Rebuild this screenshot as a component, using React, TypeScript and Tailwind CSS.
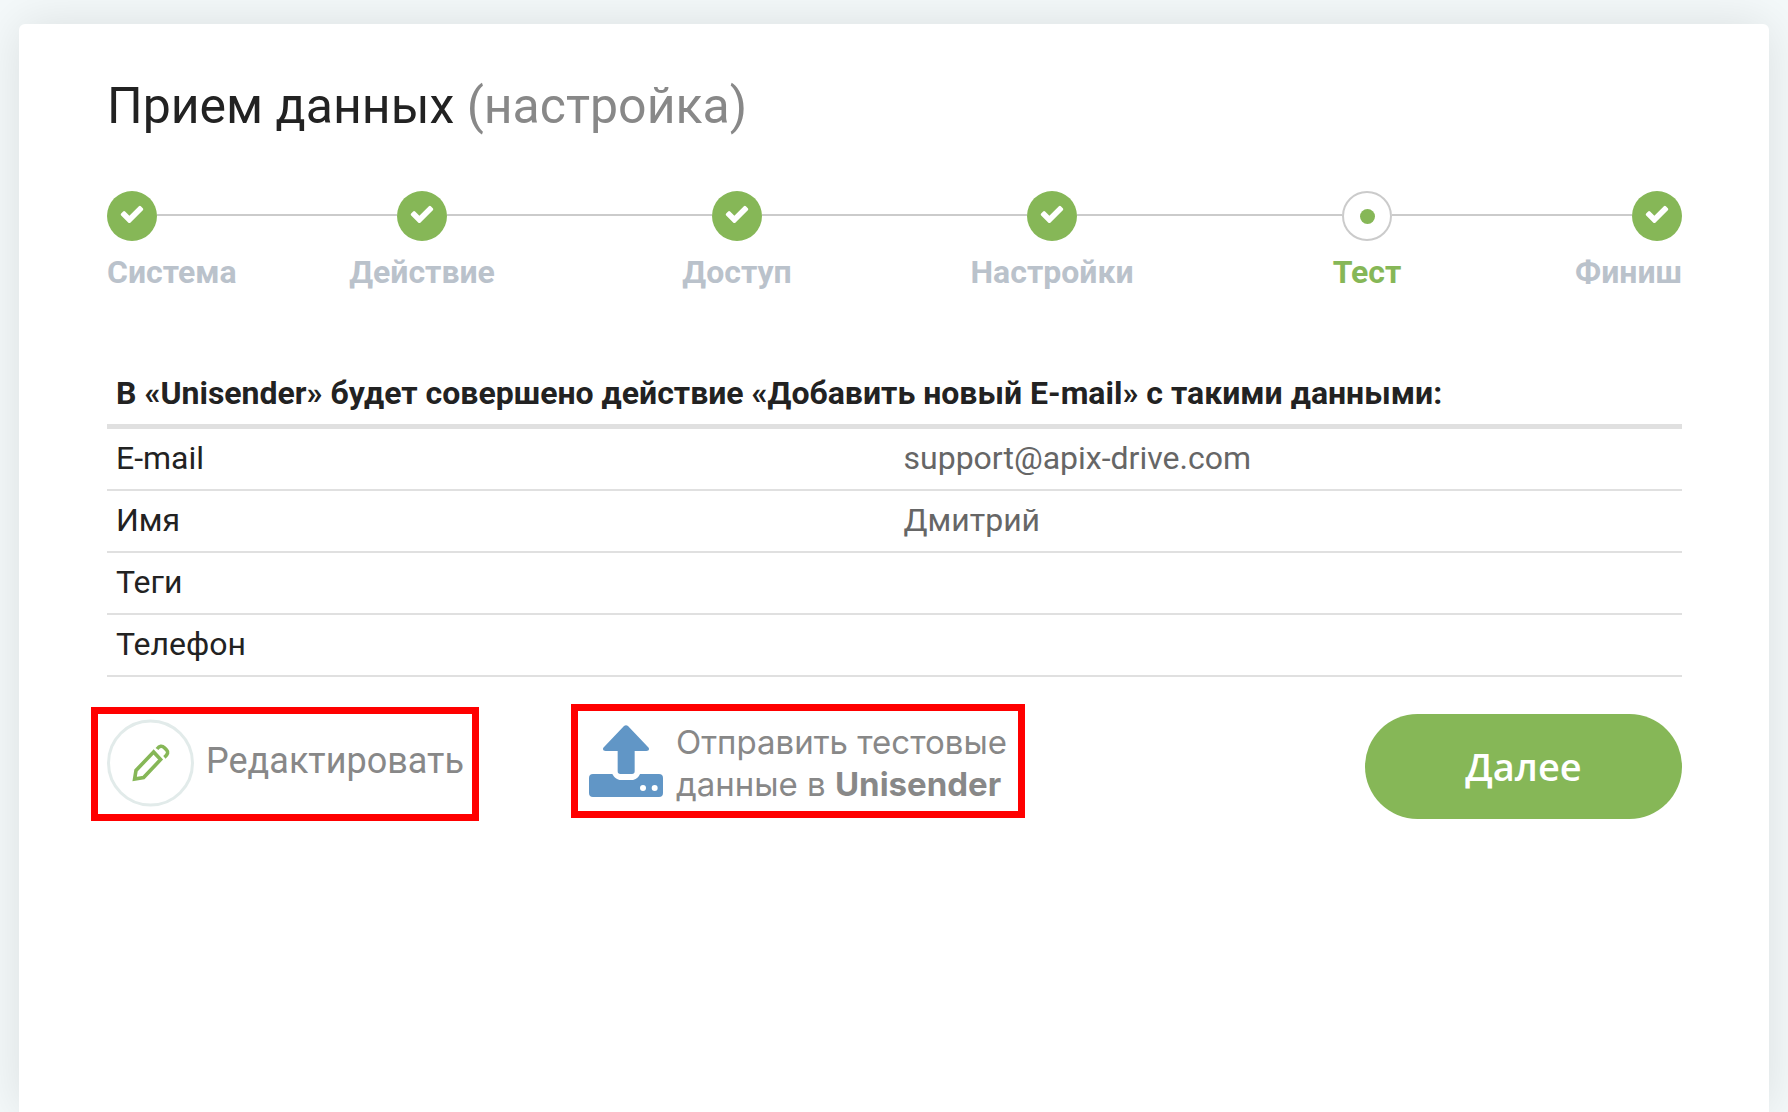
type Step = { label: string; state: "done" | "current" };

const steps: Step[] = [
  { label: "Система", state: "done" },
  { label: "Действие", state: "done" },
  { label: "Доступ", state: "done" },
  { label: "Настройки", state: "done" },
  { label: "Тест", state: "current" },
  { label: "Финиш", state: "done" },
];

const rows = [
  { name: "E-mail", value: "support@apix-drive.com" },
  { name: "Имя", value: "Дмитрий" },
  { name: "Теги", value: "" },
  { name: "Телефон", value: "" },
];

function CheckIcon() {
  return (
    <svg viewBox="0 0 1792 1792" className="size-[26px] fill-white" aria-hidden="true">
      <path d="M1671 566q0 40-28 68L919 1358l-136 136q-28 28-68 28t-68-28L511 1358 149 996q-28-28-28-68t28-68l136-136q28-28 68-28t68 28l294 295 656-657q28-28 68-28t68 28l136 136q28 28 28 68z" />
    </svg>
  );
}

function PencilIcon() {
  return (
    <svg viewBox="0 0 88 88" className="size-[88px] shrink-0" fill="none" aria-hidden="true">
      <circle cx="43.5" cy="44" r="42" stroke="#e2ebea" strokeWidth="3" />
      <g stroke="#86b757" strokeWidth="3.6">
        <path d="M46.6 33 29 51.4 27.6 60 36.6 58.6 53.6 40.6Z" />
        <path d="M50 30Q53.8 25.2 57.4 28.8L59.6 31Q62.6 34 57.4 38.4" />
      </g>
    </svg>
  );
}

function UploadIcon() {
  return (
    <svg viewBox="0 0 222 216" className="h-[72px] w-[74px] shrink-0" fill="#6196c6" aria-hidden="true">
      <path d="M105 3Q111-2 117 3L179 68Q183 78 172 78H137V139Q137 147 129 147H94Q86 147 86 139V78H50Q39 78 43 68Z" />
      <path d="M12 147H70C76 158 84 165 96 165H128C140 165 148 158 153 147H210Q222 147 222 159V204Q222 216 210 216H12Q0 216 0 204V159Q0 147 12 147Z" />
      <circle cx="162" cy="189" r="9" fill="#fff" />
      <circle cx="197" cy="189" r="9" fill="#fff" />
    </svg>
  );
}

function Stepper() {
  return (
    <ol className="mt-[52px] grid grid-cols-[1fr_2fr_2fr_2fr_2fr_1fr]">
      {steps.map((step, i) => {
        const first = i === 0;
        const last = i === steps.length - 1;
        const current = step.state === "current";
        return (
          <li
            key={step.label}
            aria-current={current ? "step" : undefined}
            className={first ? "text-left" : last ? "text-right" : "text-center"}
          >
            <div className="flex items-center">
              {!first && <span className="mb-0.5 h-0.5 flex-1 bg-[#cbcbcb]" />}
              {current ? (
                <span className="flex size-[50px] items-center justify-center rounded-full border-2 border-[#cbcbcb]">
                  <span className="size-[15px] rounded-full bg-[#86b757]" />
                </span>
              ) : (
                <span className="flex size-[50px] items-center justify-center rounded-full bg-[#86b757] pb-1">
                  <CheckIcon />
                </span>
              )}
              {!last && <span className="mb-0.5 h-0.5 flex-1 bg-[#cbcbcb]" />}
            </div>
            <div
              className={
                current
                  ? "mt-[11px] text-[32px] leading-10 font-bold text-[#86b757]"
                  : "mt-[11px] text-[32px] leading-10 font-bold text-[#bac2cb]"
              }
            >
              {step.label}
            </div>
          </li>
        );
      })}
    </ol>
  );
}

function DataTable() {
  return (
    <table className="mt-[72px] w-full table-fixed text-left text-[32px] leading-10 text-[#222]">
      <thead>
        <tr className="border-b-[5px] border-[#e0e0e0]">
          <th colSpan={2} className="px-[9px] pt-[9px] pb-[11px] font-bold">
            В «Unisender» будет совершено действие «Добавить новый E-mail» с такими данными:
          </th>
        </tr>
      </thead>
      <tbody>
        {rows.map((row) => (
          <tr key={row.name} className="border-b-2 border-[#e0e0e0]">
            <th scope="row" className="px-[9px] pt-[9px] pb-[11px] font-normal">
              {row.name}
            </th>
            <td className="px-[9px] pt-[9px] pb-[11px] text-[#666]">{row.value}</td>
          </tr>
        ))}
      </tbody>
    </table>
  );
}

export default function App() {
  return (
    <div className="flex min-h-screen flex-col overflow-hidden bg-[#f4f9fa] px-[19px] pt-6 font-['Roboto',sans-serif]">
      <main className="flex-1 rounded-t-md bg-white pt-[50px] pr-[87px] pl-[88px] shadow-[0_0_50px_rgba(0,0,0,0.11)]">
        <h1 className="text-[50px] leading-[65px] text-[#222]">
          Прием данных <span className="text-[#888]">(настройка)</span>
        </h1>
        <Stepper />
        <DataTable />
        <div className="mt-[27px] flex items-start">
          <button
            type="button"
            className="mt-[3px] -ml-4 flex h-[114px] items-start gap-[11px] border-[7px] border-[#f00] pt-[5px] pr-2 pl-[9px] text-4xl leading-[84px] text-[#888]"
          >
            <PencilIcon />
            Редактировать
          </button>
          <button
            type="button"
            className="ml-[92px] flex h-[114px] items-center gap-[13px] border-[7px] border-[#f00] px-[11px] text-left font-['Inter',sans-serif] text-[33px] leading-[42px] text-[#888]"
          >
            <UploadIcon />
            <span className="pt-1">
              Отправить тестовые
              <br />
              данные в <b className="font-bold">Unisender</b>
            </span>
          </button>
          <button
            type="button"
            className="mt-2.5 ml-auto h-[105px] w-[317px] rounded-full bg-[#86b757] font-['Open_Sans',sans-serif] text-[38px] font-semibold text-white"
          >
            Далее
          </button>
        </div>
      </main>
    </div>
  );
}
